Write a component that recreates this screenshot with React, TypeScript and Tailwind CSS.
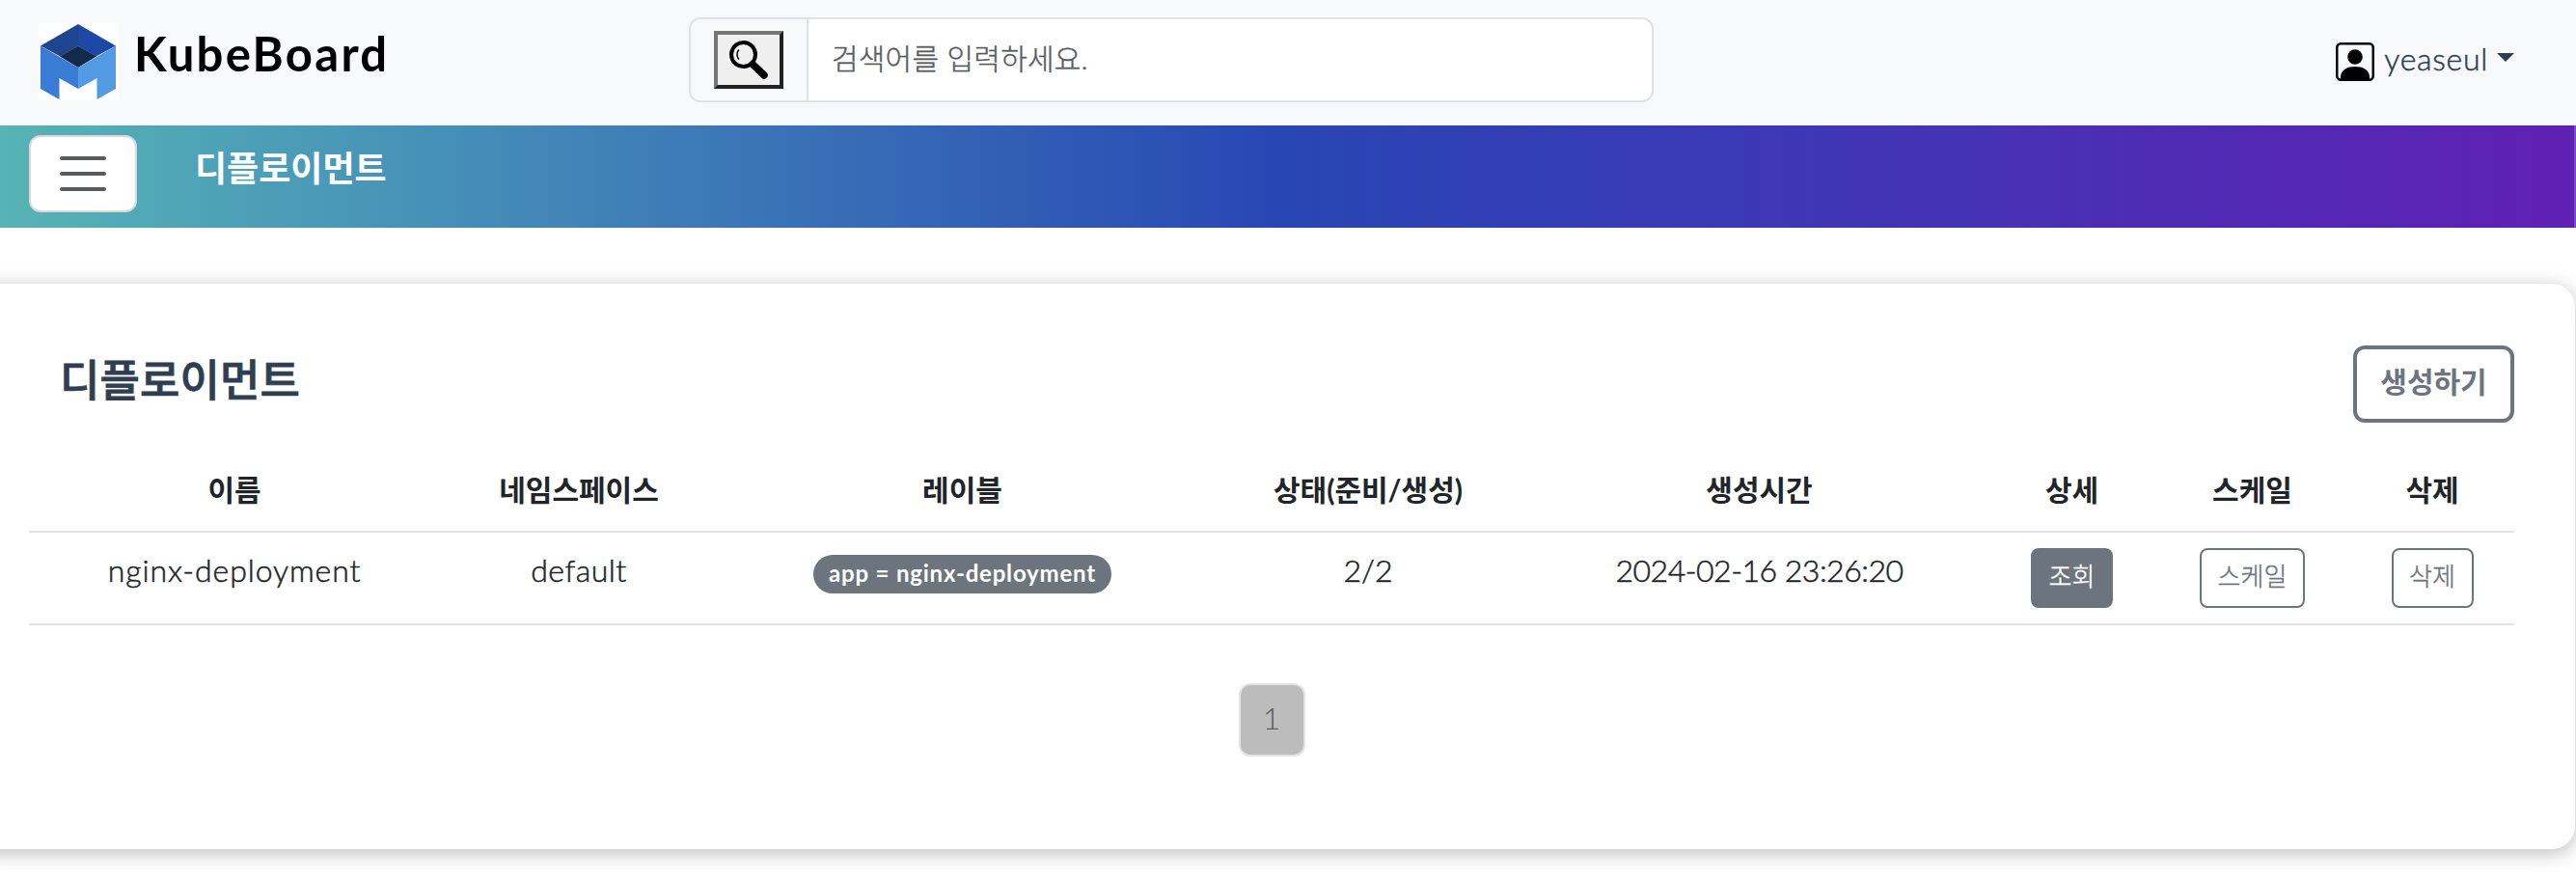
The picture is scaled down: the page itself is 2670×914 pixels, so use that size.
import React from "react";

const columns = [
  { label: "이름", width: "w-[426px]" },
  { label: "네임스페이스", width: "w-[288px]" },
  { label: "레이블", width: "w-[507px]" },
  { label: "상태(준비/생성)", width: "w-[334px]" },
  { label: "생성시간", width: "w-[477px]" },
  { label: "상세", width: "w-[171px]" },
  { label: "스케일", width: "w-[203px]" },
  { label: "삭제", width: "w-[170px]" },
];

function Logo() {
  return (
    <svg className="h-20 w-[83px] shrink-0" viewBox="0 0 83 80">
      <rect width="83" height="80" fill="#fff" />
      <path d="M41 1 2 23.5 22.5 34.5 41 23.5z" fill="#1d468f" />
      <path d="M41 1 80 23.5 59.500 34.500 41 23.500z" fill="#1e48a8" />
      <path d="M41 23.500 60 34.500 41 46 22 34.500z" fill="#142a4a" />
      <path d="M2 23.500 41 46V68L21.500 57V79L2 68z" fill="#3a7bd5" />
      <path d="M80 23.500 41 46V68L60.500 57V79L80 68z" fill="#529be3" />
    </svg>
  );
}

function SearchIcon() {
  return (
    <svg className="h-10 w-10" viewBox="0 0 40 40" fill="none" stroke="#000" strokeLinecap="round">
      <circle cx="14.500" cy="14.500" r="12.500" strokeWidth="4" />
      <path d="M24 24.500 36 36" strokeWidth="7.500" />
      <path d="M9.500 10Q6.500 14.500 9.500 19" strokeWidth="1.500" />
    </svg>
  );
}

function UserIcon() {
  return (
    <svg className="h-10 w-10 shrink-0" viewBox="0 0 40 40">
      <rect x="1.250" y="1.250" width="37.500" height="37.500" rx="4" fill="none" stroke="#000" strokeWidth="2.500" />
      <circle cx="20" cy="15" r="7.800" />
      <path d="M5 38V35C6 28 12 25 20 25S34 28 35 35V38z" />
    </svg>
  );
}

export default function App() {
  return (
    <div className="h-[914px] w-[2670px] overflow-hidden bg-white font-['Lato','Noto_Sans_CJK_KR',sans-serif] text-[#212529]">
      <header className="flex h-[130px] items-start bg-[#f8f9fb]">
        <div className="flex w-[714px] items-start pl-10 pt-6">
          <Logo />
          <span className="ml-[16px] text-[49px] leading-[62px] font-bold tracking-[2.3px] whitespace-nowrap text-black">KubeBoard</span>
        </div>
        <div className="mt-[18px] flex h-[88px] w-[1000px] overflow-hidden rounded-xl border-2 border-[#dee2e8] bg-white">
          <div className="flex w-[122px] items-center justify-center border-r-2 border-[#dee2e8] bg-[#f8f9fb]">
            <button className="flex h-[60px] w-[72px] items-center justify-center border-4 border-t-[#767676] border-r-[#212121] border-b-[#212121] border-l-[#767676] bg-[#efefef]">
              <SearchIcon />
            </button>
          </div>
          <span className="pl-6 text-[30px] leading-[80px] font-light tracking-[0.2px] text-[#595c5f] [-webkit-text-stroke:0.4px]">검색어를 입력하세요.</span>
        </div>
        <div className="ml-auto flex items-start pt-11 pr-[64px]">
          <UserIcon />
          <span className="ml-[10px] text-[32px] leading-[34px] font-light tracking-[0.7px] text-[#2f3e52] [-webkit-text-stroke:0.5px]">yeaseul</span>
          <span className="mt-[11px] ml-[9px] border-x-[9px] border-t-[9px] border-x-transparent border-t-[#2f3e52]" />
        </div>
      </header>

      <div className="flex h-[106px] items-start border-r-2 border-[#7b4fc3] bg-[linear-gradient(to_right,#56b4b5,#4690b8_17%,#2846b4_50%,#6020b4)] pt-[10px] pl-[30px]">
        <button className="flex h-20 w-28 flex-col items-center justify-center gap-3 rounded-xl border-2 border-[#d9d9dc] bg-white">
          <span className="h-1 w-12 rounded-full bg-[#595c5f]" />
          <span className="h-1 w-12 rounded-full bg-[#595c5f]" />
          <span className="h-1 w-12 rounded-full bg-[#595c5f]" />
        </button>
        <span className="ml-[60px] text-[36px] leading-[69px] font-bold text-white">디플로이먼트</span>
      </div>

      <main className="mt-[58px] -ml-10 h-[586px] w-[2709px] rounded-[24px] bg-white pt-16 pl-[70px] shadow-[0_4px_20px_rgba(0,0,0,0.27)]">
        <div className="flex h-20 w-[2576px] items-start justify-between pl-8">
          <h1 className="text-[45px] leading-[73px] font-medium tracking-[0.1px] text-[#2f3e50] [-webkit-text-stroke:0.8px]">디플로이먼트</h1>
          <button className="h-20 w-[167px] rounded-xl border-4 border-[#6c757d] text-[30px] leading-[67px] font-bold text-[#6c757d]">
            <span className="block h-[72px]">생성하기</span>
          </button>
        </div>
        <table className="mt-[33px] w-[2576px] table-fixed border-collapse text-center">
          <thead>
            <tr className="h-[80px] border-b-2 border-[#dee2e6] align-top">
              {columns.map((c) => (
                <th key={c.label} className={`${c.width} pt-[12px] text-[30px] leading-[48px] font-bold`}>{c.label}</th>
              ))}
            </tr>
          </thead>
          <tbody>
            <tr className="h-[96px] border-b-2 border-[#dee2e6] align-top text-[32px] leading-[46px] font-light">
              <td className="pt-4 tracking-[0.9px] [-webkit-text-stroke:0.5px]">nginx-deployment</td>
              <td className="pt-4 tracking-[0.5px] [-webkit-text-stroke:0.5px]">default</td>
              <td className="pt-[23px]">
                <span className="mx-auto block h-10 w-[309px] rounded-[20px] bg-[#6c757d] text-[24px] leading-[38px] font-bold tracking-[0.8px] text-white">app = nginx-deployment</span>
              </td>
              <td className="pt-4 [-webkit-text-stroke:0.5px]">2/2</td>
              <td className="pt-4 tracking-[-0.5px] [-webkit-text-stroke:0.5px]">2024-02-16 23:26:20</td>
              <td className="pt-4">
                <button className="mx-auto block h-[62px] w-[85px] rounded-lg bg-[#6c757d] text-[26px] leading-[56px] text-white [-webkit-text-stroke:0.4px]">
                  <span className="block h-[60px]">조회</span>
                </button>
              </td>
              <td className="pt-4">
                <button className="mx-auto block h-[62px] w-[109px] rounded-lg border-2 border-[#6c757d] text-[26px] leading-[53px] text-[#6c757d] [-webkit-text-stroke:0.4px]">
                  <span className="block h-[56px]">스케일</span>
                </button>
              </td>
              <td className="pt-4">
                <button className="mx-auto block h-[62px] w-[85px] rounded-lg border-2 border-[#6c757d] text-[26px] leading-[53px] text-[#6c757d] [-webkit-text-stroke:0.4px]">
                  <span className="block h-[56px]">삭제</span>
                </button>
              </td>
            </tr>
          </tbody>
        </table>
        <nav className="mt-[60px] flex w-[2576px] justify-center">
          <button className="h-[76px] w-[69px] rounded-xl border-2 border-[#e3e3e3] bg-[#bcbcbc] text-[32px] leading-[66px] font-light text-[#5d5d5d]">
            <span className="block h-[70px]">1</span>
          </button>
        </nav>
      </main>
    </div>
  );
}
